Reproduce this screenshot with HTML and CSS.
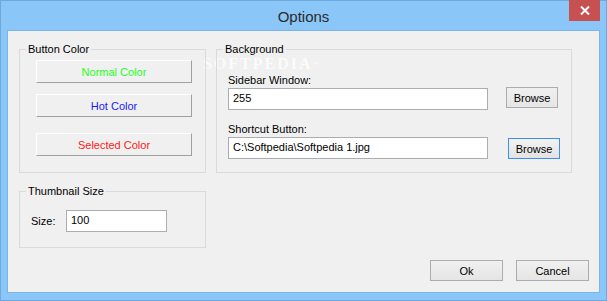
FILE: index.html
```html
<!DOCTYPE html>
<html>

<head>
  <link rel="stylesheet" href="styles.css">
</head>

<body>
  <div class="window">
    <div class="titlebar">
      <span class="title">Options</span>
      <button class="close-btn" title="Close">
        <svg width="10" height="9" viewBox="0 0 10 9">
          <path d="M1 0.5 L9 8.5 M9 0.5 L1 8.5" stroke="#ffffff" stroke-width="2" fill="none" />
        </svg>
      </button>
    </div>

    <div class="client">
      <div class="watermark">SOFTPEDIA<span class="tm">™</span></div>

      <div class="top-row">
        <div class="group color-group">
          <span class="group-title">Button Color</span>
          <button class="btn color-btn normal">Normal Color</button>
          <button class="btn color-btn hot">Hot Color</button>
          <button class="btn color-btn selected">Selected Color</button>
        </div>

        <div class="group bg-group">
          <span class="group-title">Background</span>
          <label class="field-label" for="sidebar">Sidebar Window:</label>
          <div class="field-row">
            <input type="text" class="text-input wide" id="sidebar" value="255" />
            <button class="btn browse">Browse</button>
          </div>
          <label class="field-label second" for="shortcut">Shortcut Button:</label>
          <div class="field-row">
            <input type="text" class="text-input wide" id="shortcut" value="C:\Softpedia\Softpedia 1.jpg" />
            <button class="btn browse focused">Browse</button>
          </div>
        </div>
      </div>

      <div class="group thumb-group">
        <span class="group-title">Thumbnail Size</span>
        <div class="size-row">
          <label for="size">Size:</label>
          <input type="text" class="text-input small" id="size" value="100" />
        </div>
      </div>

      <div class="footer">
        <button class="btn dlg-btn">Ok</button>
        <button class="btn dlg-btn">Cancel</button>
      </div>
    </div>
  </div>
</body>

</html>
```

FILE: styles.css
```css
html,
body {
  margin: 0;
  padding: 0;
}

body {
  font-family: "Liberation Sans", Arial, sans-serif;
  font-size: 11px;
  color: #000000;
  background: #8ac6f8;
}

.window {
  width: 607px;
  height: 301px;
  box-sizing: border-box;
  border: 1px solid #6fa8dc;
  background: #8ac6f8;
  display: flex;
  flex-direction: column;
}

.titlebar {
  position: relative;
  height: 29px;
  display: flex;
  align-items: center;
  justify-content: center;
}

.title {
  font-size: 15px;
  color: #2b2b2b;
  margin-top: 1px;
}

.close-btn {
  position: absolute;
  top: -1px;
  right: 6px;
  width: 31px;
  height: 21px;
  border: none;
  padding: 0;
  background: #c75050;
  display: flex;
  align-items: center;
  justify-content: center;
}

.client {
  position: relative;
  margin: 0 6px 0 6px;
  height: 263px;
  box-sizing: border-box;
  border: 1px solid #7db4e6;
  background: #f0f0f0;
  padding: 18px 10px 0 11px;
}

/* faint watermark sitting between the group title and first label */
.watermark {
  position: absolute;
  left: 195px;
  top: 26px;
  font-family: "Liberation Serif", serif;
  font-weight: bold;
  font-size: 16px;
  line-height: 14px;
  letter-spacing: 2px;
  color: rgba(255, 255, 255, 0.75);
  pointer-events: none;
}

.watermark .tm {
  font-size: 6px;
  vertical-align: top;
}

.top-row {
  display: flex;
  gap: 10px;
}

.group {
  position: relative;
  box-sizing: border-box;
  border: 1px solid #dadada;
}

.group-title {
  position: absolute;
  top: -8px;
  left: 6px;
  padding: 0 2px;
  background: #f0f0f0;
  line-height: 14px;
}

.color-group {
  width: 187px;
  height: 124px;
  padding: 10px 0 0 16px;
  display: flex;
  flex-direction: column;
  align-items: flex-start;
}

.btn {
  font-family: "Liberation Sans", Arial, sans-serif;
  font-size: 11px;
  padding: 0;
  box-sizing: border-box;
  color: #000000;
  border: 1px solid #acacac;
  background: linear-gradient(#f0f0f0, #e5e5e5);
}

.color-btn {
  width: 156px;
  height: 23px;
  background: #f0f0f0;
  border-color: #ffffff #a0a0a0 #a0a0a0 #ffffff;
}

.color-btn.normal {
  color: #22ff22;
}

.color-btn.hot {
  color: #1a1aff;
  margin-top: 11px;
}

.color-btn.selected {
  color: #ff1a1a;
  margin-top: 16px;
}

.bg-group {
  width: 356px;
  height: 124px;
  padding: 23px 0 0 11px;
}

.field-label {
  position: relative;
  display: block;
  line-height: 14px;
}

.field-label.second {
  margin-top: 12px;
}

.field-row {
  display: flex;
  align-items: flex-start;
  margin-top: 1px;
}

.text-input {
  box-sizing: border-box;
  height: 22px;
  border: 1px solid #abadb3;
  background: #ffffff;
  font-family: "Liberation Sans", Arial, sans-serif;
  font-size: 11px;
  padding: 0 4px 2px 4px;
  outline: none;
}

.text-input.wide {
  width: 260px;
}

.browse {
  width: 52px;
  height: 21px;
  margin-left: 18px;
  margin-top: -1px;
}

.browse.focused {
  margin-left: 20px;
  margin-top: 1px;
  border-color: #3c8ff0;
  background: linear-gradient(#f2f2f2, #e3e3e3);
}

.thumb-group {
  margin-top: 18px;
  width: 187px;
  height: 57px;
  padding: 18px 0 0 11px;
}

.size-row {
  display: flex;
  align-items: center;
}

.size-row label {
  width: 35px;
}

.text-input.small {
  width: 101px;
}

.footer {
  display: flex;
  justify-content: flex-end;
  gap: 13px;
  margin-top: 12px;
}

.dlg-btn {
  width: 73px;
  height: 21px;
}
```
